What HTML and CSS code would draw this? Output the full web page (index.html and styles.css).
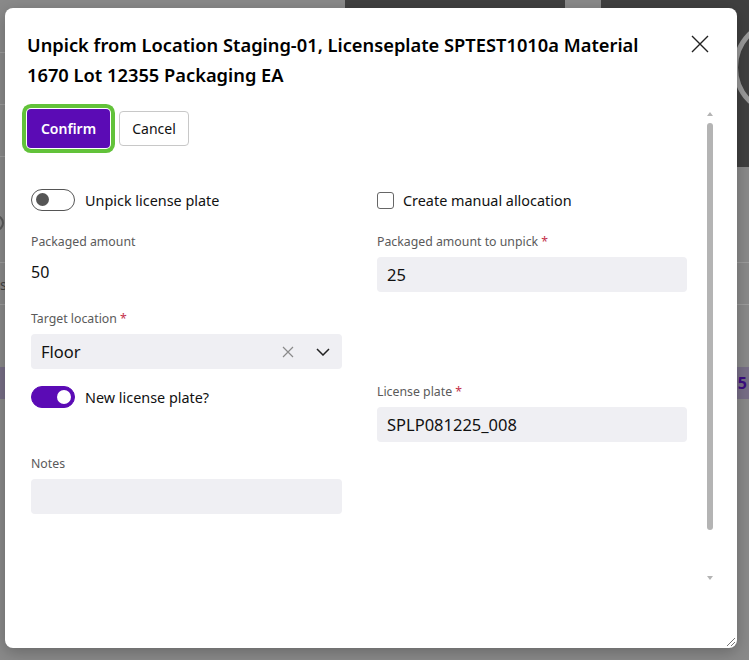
FILE: index.html
```html
<!DOCTYPE html>
<html lang="en">
<head>
<meta charset="utf-8">
<title>Unpick</title>
<link rel="stylesheet" href="styles.css">
</head>
<body>
<div class="page">
  <div class="page-head">
    <div class="page-left">
      <div class="pl-row"><span class="pl-y">y</span></div>
      <div class="pl-row"></div>
      <div class="pl-row"></div>
      <div class="pl-icon"></div>
    </div>
    <div class="dark-a"></div>
    <div class="page-gap"></div>
    <div class="dark-b"><div class="ring"></div></div>
  </div>
  <div class="page-line first"></div>
  <div class="page-line"><span class="pl-s">s</span></div>
  <div class="page-band"><span class="band-num">5</span></div>
</div>

<div class="modal" role="dialog">
  <div class="modal-head">
    <h1 class="modal-title">Unpick from Location Staging-01, Licenseplate SPTEST1010a Material 1670 Lot 12355 Packaging EA</h1>
    <button class="close" aria-label="Close">
      <svg width="18" height="18" viewBox="0 0 18 18"><path d="M1 1L17 17M17 1L1 17" stroke="#222" stroke-width="1.4" fill="none"/></svg>
    </button>
  </div>
  <div class="modal-body">
    <div class="actions">
      <button class="btn btn-primary">Confirm</button>
      <button class="btn btn-secondary">Cancel</button>
    </div>

    <div class="row row-1">
      <label class="switch-field"><span class="switch"><span class="knob"></span></span><span class="field-text">Unpick license plate</span></label>
      <label class="check-field"><span class="checkbox"></span><span class="field-text">Create manual allocation</span></label>
    </div>

    <div class="row row-2">
      <div class="field">
        <div class="label">Packaged amount</div>
        <div class="value">50</div>
      </div>
      <div class="field">
        <div class="label">Packaged amount to unpick <span class="req">*</span></div>
        <div class="input">25</div>
      </div>
    </div>

    <div class="row row-3">
      <div class="field">
        <div class="label">Target location <span class="req">*</span></div>
        <div class="input select">
          <span class="select-value">Floor</span>
          <svg class="clear" width="12" height="12" viewBox="0 0 12 12"><path d="M1 1L11 11M11 1L1 11" stroke="#8a8a8a" stroke-width="1.2" fill="none"/></svg>
          <svg class="chev" width="14" height="8" viewBox="0 0 14 8"><path d="M1 1L7 7L13 1" stroke="#222" stroke-width="1.5" fill="none"/></svg>
        </div>
      </div>
      <div></div>
    </div>

    <div class="row row-4">
      <label class="switch-field top"><span class="switch on"><span class="knob"></span></span><span class="field-text">New license plate?</span></label>
      <div class="field">
        <div class="label">License plate <span class="req">*</span></div>
        <div class="input">SPLP081225_008</div>
      </div>
    </div>

    <div class="row row-5">
      <div class="field">
        <div class="label">Notes</div>
        <div class="input"></div>
      </div>
      <div></div>
    </div>
  </div>
  <div class="scrollbar" aria-hidden="true">
    <span class="arrow up"></span>
    <span class="thumb"></span>
    <span class="arrow down"></span>
  </div>
  <div class="grip"></div>
</div>
</body>
</html>
```
FILE: styles.css
```css
* { box-sizing: border-box; }
html, body { margin: 0; padding: 0; width: 749px; height: 660px; overflow: hidden; }
body { font-family: "Noto Sans", "Open Sans", sans-serif; background: #8a8a8a; color: #111; }

/* dimmed page behind the dialog */
.page { width: 749px; height: 660px; background: #8a8a8a; }
.page-head { display: flex; height: 167px; }
.page-left { width: 345px; }
.pl-row { height: 53px; border-bottom: 1px solid #9d9d9d; }
.pl-row + .pl-row { height: 52px; }
.pl-y { font-size: 14px; color: #333; margin-left: 118px; line-height: 0; }
.dark-a { width: 220px; height: 60px; background: #404040; }
.page-gap { width: 36px; }
.dark-b { flex: 1; background: #404040; position: relative; overflow: hidden; }
.ring { position: absolute; left: 132px; top: 20px; width: 90px; height: 95px; border: 5px solid #9a9a9a; border-radius: 50%; }
.pl-icon { margin: 58px 0 0 -12px; width: 16px; height: 16px; border: 2px solid #5a5a5a; border-radius: 50%; }
.page-line { height: 42px; border-bottom: 1px solid #9d9d9d; }
.page-line.first { margin-top: 54px; }
.pl-s { font-size: 14px; color: #444; margin-left: 0; line-height: 44px; }
.page-band { margin-top: 62px; height: 32px; background: #786f87; text-align: right; }
.band-num { color: #3b0c82; font-weight: 700; font-size: 16px; line-height: 32px; margin-right: 2px; }

/* dialog */
.modal {
  position: absolute; left: 5px; top: 8px; width: 732px; height: 640px;
  background: #fff; border-radius: 8px; box-shadow: 0 4px 16px rgba(0,0,0,.25);
}
.modal-head { display: flex; align-items: flex-start; padding: 22px 28px 0 22px; }
.modal-title { flex: 1; margin: 0 30px 0 0; font-size: 18.3px; font-weight: 600; line-height: 30px; color: #000; }
.close { border: 0; background: none; padding: 0; margin-top: 5px; width: 18px; height: 18px; cursor: pointer; }

.modal-body {
  margin: 14px 22px 0 14px; height: 481px; overflow: hidden;
  padding: 5px 28px 0 12px;
}

.scrollbar { position: absolute; left: 702px; top: 104px; width: 6px; height: 468px; display: flex; flex-direction: column; align-items: center; }
.arrow { width: 0; height: 0; border-left: 3.5px solid transparent; border-right: 3.5px solid transparent; flex: none; }
.arrow.up { border-bottom: 4px solid #b4b4b4; }
.arrow.down { border-top: 4px solid #b4b4b4; margin-top: auto; }
.thumb { width: 6px; height: 407px; border-radius: 3px; background: #b4b4b4; margin-top: 7px; }

.actions { display: flex; gap: 9px; margin-left: -4px; align-items: center; }
.btn { font-family: inherit; font-size: 14px; height: 36px; border-radius: 4px; padding: 0 12px; cursor: pointer; }
.btn-primary { background: #5b0bb5; color: #fff; border: 0; font-weight: 600; width: 83px; height: 39px; box-shadow: 0 0 0 1px #fff, 0 0 0 5px #62c23a; }
.btn-secondary { background: #fff; color: #111; border: 1px solid #c8c8c8; width: 70px; height: 35px; }

.row { display: grid; grid-template-columns: 311px 310px; column-gap: 35px; }
.row-1 { margin-top: 41px; align-items: center; }
.row-2 { margin-top: 22px; }
.row-3 { margin-top: 18px; }
.row-4 { margin-top: 14px; }
.row-5 { margin-top: 13px; }

.switch-field, .check-field { display: flex; align-items: center; font-size: 14.4px; color: #111; }
.switch-field.top { align-self: start; margin-top: 3px; }
.switch { width: 44px; height: 22px; border-radius: 11px; border: 1.5px solid #555; position: relative; margin-right: 10px; flex: none; }
.switch .knob { position: absolute; left: 4px; top: 3px; width: 13px; height: 13px; border-radius: 50%; background: #555; }
.switch.on { background: #5b0bb5; border-color: #5b0bb5; }
.switch.on .knob { left: auto; right: 3px; background: #fff; width: 14px; height: 14px; top: 2.5px; }
.checkbox { width: 17px; height: 17px; border: 1px solid #666; border-radius: 3px; margin-right: 9px; flex: none; }

.field { display: flex; flex-direction: column; }
.label { font-size: 12.3px; line-height: 18px; color: #5a5a5a; margin-bottom: 6px; }
.req { color: #c4314b; }
.value { font-size: 16px; line-height: 24px; color: #111; margin-top: 3px; }
.input { height: 35px; background: #efeff3; border-radius: 4px; padding: 0 10px; font-size: 16.5px; line-height: 35px; color: #111; }
.select { display: flex; align-items: center; padding-right: 12px; }
.select-value { flex: 1; font-size: 16.5px; }
.clear { margin-right: 22px; }

.grip { position: absolute; right: 2px; bottom: 2px; width: 8px; height: 8px;
  background: linear-gradient(135deg, transparent 45%, #777 45%, #777 52%, transparent 52%, transparent 70%, #777 70%, #777 77%, transparent 77%); }
```
